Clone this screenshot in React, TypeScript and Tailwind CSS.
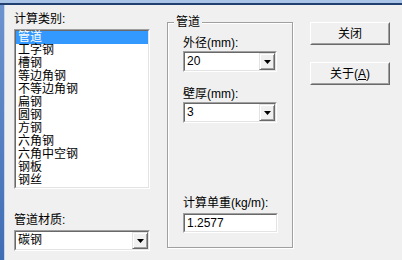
import React from "react";

const font = "font-['Liberation_Sans','Noto_Sans_CJK_SC',sans-serif]";

const kinds = [
  "管道",
  "工字钢",
  "槽钢",
  "等边角钢",
  "不等边角钢",
  "扁钢",
  "圆钢",
  "方钢",
  "六角钢",
  "六角中空钢",
  "钢板",
  "钢丝",
];

const Sunken = ({ className, children }: { className: string; children: React.ReactNode }) => (
  <div className={`border border-t-[#a0a0a0] border-l-[#a0a0a0] border-b-white border-r-white ${className}`}>
    <div className="flex h-full w-full border border-t-[#696969] border-l-[#696969] border-b-[#e3e3e3] border-r-[#e3e3e3] bg-white">
      {children}
    </div>
  </div>
);

const Arrow = () => (
  <div className="flex w-[16px] h-full items-center justify-center border border-t-[#e3e3e3] border-l-[#e3e3e3] border-b-[#696969] border-r-[#696969] bg-[#f0f0f0] shadow-[inset_1px_1px_0_#fff,inset_-1px_-1px_0_#a0a0a0]">
    <svg width="7" height="4" viewBox="0 0 7 4">
      <path d="M0 0h7L3.5 4z" fill="#000" />
    </svg>
  </div>
);

const Combo = ({ value, className }: { value: string; className: string }) => (
  <Sunken className={`h-[21px] ${className}`}>
    <div className="flex-1 pl-[2px] text-[12px] leading-[17px]">{value}</div>
    <Arrow />
  </Sunken>
);

const Button = ({ children, className = "" }: { children: React.ReactNode; className?: string }) => (
  <div
    className={`w-[80px] h-[23px] border border-t-white border-l-white border-b-[#696969] border-r-[#696969] ${className}`}
  >
    <div className="flex h-full items-center justify-center border border-t-[#f0f0f0] border-l-[#f0f0f0] border-b-[#a0a0a0] border-r-[#a0a0a0] text-[12px]">
      {children}
    </div>
  </div>
);

export default function App() {
  return (
    <div className={`w-[402px] h-[260px] bg-[#f0f0f0] flex flex-col overflow-hidden text-black ${font}`}>
      <div className="h-[3px] bg-[#a9c4e7]" />
      <div className="h-[2px] bg-[#22406f]" />
      <div className="flex flex-1">
        <div className="w-[4px] bg-gradient-to-b from-[#6d93cf] to-[#3f6db5]" />
        <div className="w-px bg-[#c7d5ea]" />
        <section className="ml-[9px] w-[136px] flex flex-col pt-[8px]">
          <div className="h-[12px] text-[12px] leading-[12px]">计算类别:</div>
          <Sunken className="mt-[4px] h-[160px] overflow-hidden">
            <ul className="flex-1 pt-0 text-[12px] leading-[13px]">
              {kinds.map((k, i) => (
                <li
                  key={k}
                  className={`h-[13px] pl-[2px] ${i === 0 ? "bg-[#3399ff] text-white" : ""}`}
                >
                  {k}
                </li>
              ))}
            </ul>
          </Sunken>
          <div className="mt-[25px] h-[12px] text-[12px] leading-[12px]">管道材质:</div>
          <Combo value="碳钢" className="mt-[4px]" />
        </section>

        <section className="ml-[17px] w-[126px] pt-[17px]">
          <div className="relative h-[226px] border border-[#a0a0a0] shadow-[inset_1px_1px_0_#fff,1px_1px_0_#fff] pl-[15px] pr-[14px] pt-[14px] flex flex-col">
            <div className="absolute -top-[7px] left-[6px] bg-[#f0f0f0] px-[2px] text-[12px] leading-[12px]">
              管道
            </div>
            <div className="h-[12px] text-[12px] leading-[12px]">外径(mm):</div>
            <Combo value="20" className="mt-[2px] w-[94px]" />
            <div className="mt-[16px] h-[12px] text-[12px] leading-[12px]">壁厚(mm):</div>
            <Combo value="3" className="mt-[2px] w-[94px]" />
            <div className="mt-[74px] h-[12px] text-[12px] leading-[12px]">计算单重(kg/m):</div>
            <Sunken className="mt-[4px] h-[20px] w-[95px]">
              <div className="pl-[2px] text-[12px] leading-[16px]">1.2577</div>
            </Sunken>
          </div>
        </section>

        <section className="ml-[17px] pt-[17px] flex flex-col">
          <Button>关闭</Button>
          <Button className="mt-[17px]">
            <span>
              关于(<span className="underline">A</span>)
            </span>
          </Button>
        </section>
      </div>
    </div>
  );
}
